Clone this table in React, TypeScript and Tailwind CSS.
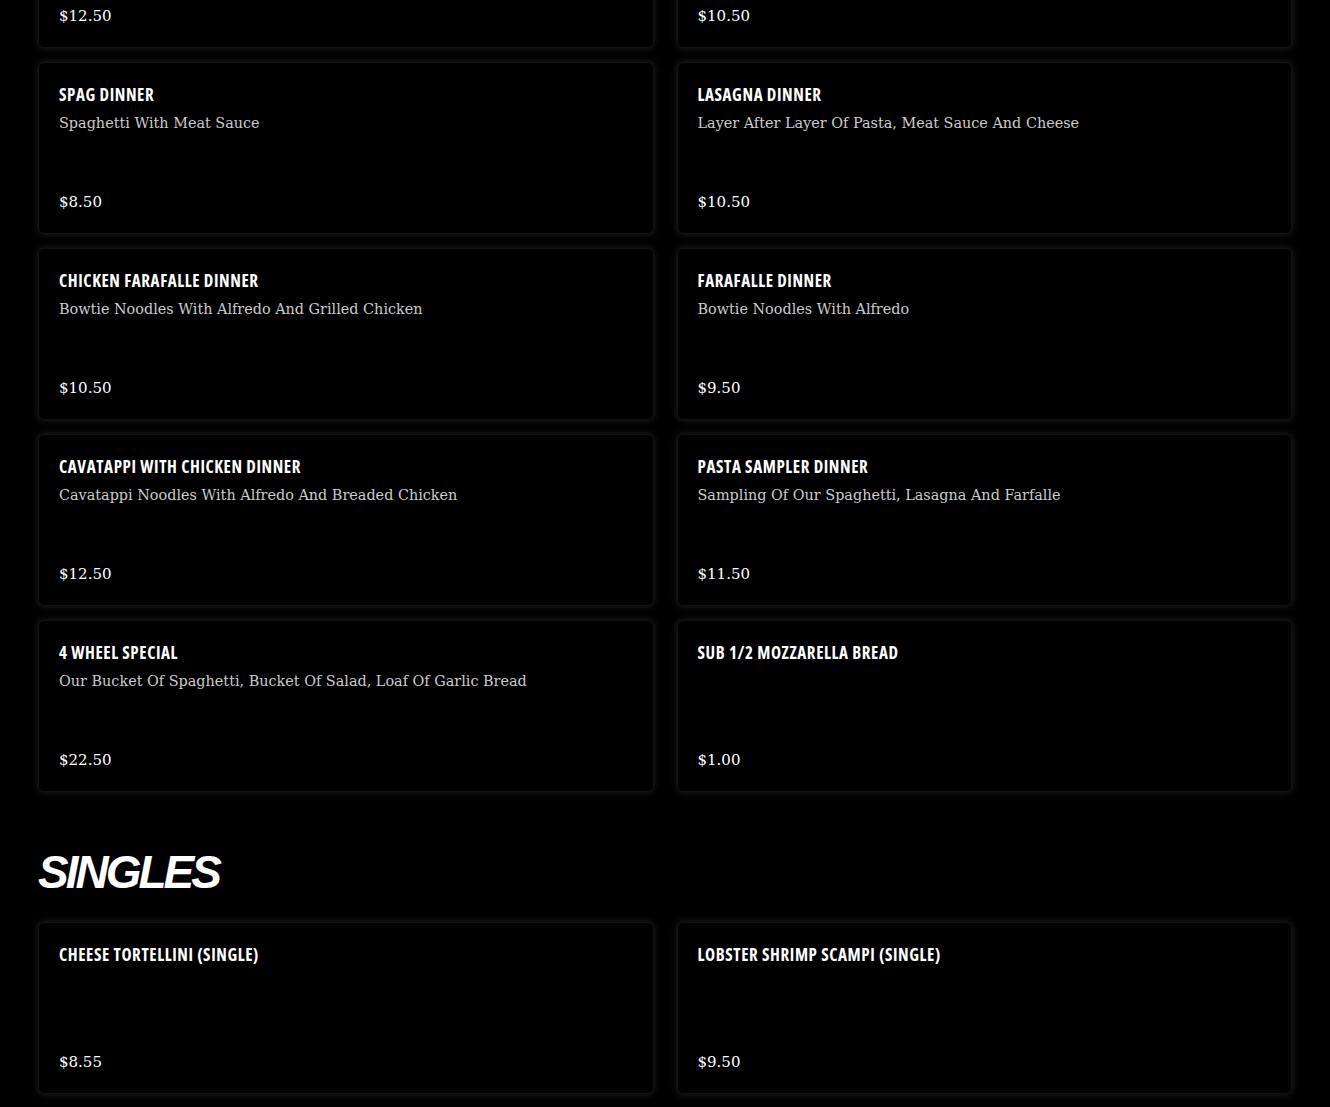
import React from 'react';

type Item = { name: string; desc?: string; price: string };

const dinners: Item[] = [
  { name: 'Cheese Tortellini Dinner', desc: '', price: '$12.50' },
  { name: 'Lobster Dinner', desc: '', price: '$10.50' },
  { name: 'Spag Dinner', desc: 'Spaghetti With Meat Sauce', price: '$8.50' },
  { name: 'Lasagna Dinner', desc: 'Layer After Layer Of Pasta, Meat Sauce And Cheese', price: '$10.50' },
  { name: 'Chicken Farafalle Dinner', desc: 'Bowtie Noodles With Alfredo And Grilled Chicken', price: '$10.50' },
  { name: 'Farafalle Dinner', desc: 'Bowtie Noodles With Alfredo', price: '$9.50' },
  { name: 'Cavatappi With Chicken Dinner', desc: 'Cavatappi Noodles With Alfredo And Breaded Chicken', price: '$12.50' },
  { name: 'Pasta Sampler Dinner', desc: 'Sampling Of Our Spaghetti, Lasagna And Farfalle', price: '$11.50' },
  { name: '4 Wheel Special', desc: 'Our Bucket Of Spaghetti, Bucket Of Salad, Loaf Of Garlic Bread', price: '$22.50' },
  { name: 'Sub 1/2 Mozzarella Bread', price: '$1.00' },
];

const singles: Item[] = [
  { name: 'Cheese Tortellini (Single)', price: '$8.55' },
  { name: 'Lobster Shrimp Scampi (Single)', price: '$9.50' },
];

function MenuCard({ item }: { item: Item }) {
  return (
    <div className="h-[172px] flex flex-col bg-black rounded-md border border-[#141414] shadow-[0_0_6px_1px_rgba(255,255,255,0.10)] px-5 pt-[21px] pb-[22px]">
      <h3 className="uppercase text-white text-[17px] leading-[22px] font-bold tracking-[0.6px] [font-family:'Open_Sans',sans-serif] [font-stretch:75%]">
        {item.name}
      </h3>
      {item.desc ? (
        <p className="mt-[8px] text-[#cbcbcb] text-[14.4px] leading-[18px] [font-family:'DejaVu_Serif',serif]">
          {item.desc}
        </p>
      ) : null}
      <div className="flex-1" />
      <p className="text-white text-[15px] leading-[18px] [font-family:'DejaVu_Serif',serif]">{item.price}</p>
    </div>
  );
}

export default function App() {
  return (
    <div className="min-h-screen bg-black overflow-hidden">
      <div className="px-[38px] mt-[-124px]">
        <div className="grid grid-cols-2 gap-x-[23px] gap-y-[14px]">
          {dinners.map((it, i) => (
            <MenuCard key={i} item={it} />
          ))}
        </div>

        <h2 className="mt-[50px] text-white italic font-black text-[46px] leading-[60px] tracking-[-3px] uppercase [font-family:'Liberation_Sans',Arial,sans-serif]">
          Singles
        </h2>

        <div className="mt-[20px] grid grid-cols-2 gap-x-[23px] gap-y-[14px]">
          {singles.map((it, i) => (
            <MenuCard key={i} item={it} />
          ))}
        </div>
      </div>
    </div>
  );
}
